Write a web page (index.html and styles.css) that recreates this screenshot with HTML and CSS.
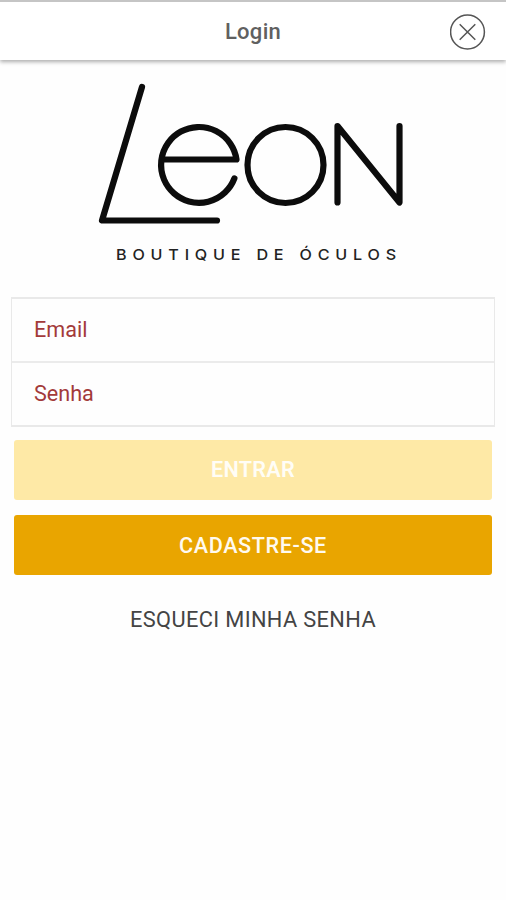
FILE: index.html
```html
<!DOCTYPE html>
<html lang="pt-BR">
<head>
<meta charset="utf-8">
<title>Login</title>
<link rel="stylesheet" href="styles.css">
</head>
<body>
<header class="bar">
  <h1 class="title">Login</h1>
  <button class="close" aria-label="Fechar">
    <svg width="36" height="36" viewBox="0 0 36 36"><circle cx="17.5" cy="18" r="16.9"/><path d="M9.7 10.2 25.3 25.8M25.3 10.2 9.7 25.8"/></svg>
  </button>
</header>
<main>
  <div class="brand">
    <svg class="mark" width="310" height="150" viewBox="96 80 310 150" role="img" aria-label="Leon">
      <polyline points="142,87 102,220.5 217,220.5"/>
      <path d="M162 159.5H236.5A37.9 37.9 0 1 0 234.4 178.4"/>
      <circle cx="285.5" cy="165" r="38"/>
      <polyline points="337.5,202.5 337.5,126 399.5,202.5 399.5,126"/>
    </svg>
    <p class="tagline">BOUTIQUE DE ÓCULOS</p>
  </div>
  <form class="form">
    <div class="fields">
      <label class="field">Email</label>
      <label class="field">Senha</label>
    </div>
    <button type="button" class="btn btn-enter">ENTRAR</button>
    <button type="button" class="btn btn-register">CADASTRE-SE</button>
    <a class="forgot">ESQUECI MINHA SENHA</a>
  </form>
</main>
</body>
</html>
```
FILE: styles.css
```css
* { box-sizing: border-box; }
body {
  margin: 0;
  min-height: 900px;
  background: #fefefe;
  font-family: Roboto, "Liberation Sans", sans-serif;
}
button { border: 0; padding: 0; background: none; font: inherit; }
.bar {
  height: 60px;
  display: grid;
  grid-template-columns: 1fr auto 1fr;
  align-items: center;
  padding: 2px 20px 0;
  border-top: 2px solid #c5c5c5;
  background: #fff;
  box-shadow: 0 2px 4px rgba(0, 0, 0, .32);
}
.title {
  grid-column: 2;
  margin: 0;
  font-size: 22px;
  line-height: 26px;
  font-weight: 500;
  letter-spacing: .3px;
  color: #606060;
}
.close { justify-self: end; width: 36px; height: 36px; }
.close svg { display: block; fill: none; stroke: #555; stroke-width: 1.5; }
.brand {
  height: 237px;
  padding-top: 20px;
  display: flex;
  flex-direction: column;
  align-items: center;
}
.mark {
  margin-right: 4px;
  fill: none;
  stroke: #0c0c0c;
  stroke-width: 6.2;
  stroke-linecap: round;
  stroke-linejoin: round;
}
.tagline {
  margin: 15px 0 0 11px;
  font-family: Inter, sans-serif;
  font-size: 15px;
  line-height: 20px;
  font-weight: 500;
  letter-spacing: 5.4px;
  white-space: nowrap;
  color: #222;
  transform: scaleX(1.075);
}
.form { display: flex; flex-direction: column; padding: 0 14px; }
.fields {
  margin: 0 -3px 13px;
  border: 2px solid #e9e9e9;
  border-width: 2px 1px;
}
.field {
  display: flex;
  align-items: center;
  height: 62px;
  padding: 0 0 2px 22px;
  font-size: 21.6px;
  color: #a33a3a;
}
.field + .field { height: 64px; border-top: 2px solid #ebebeb; }
.btn {
  height: 60px;
  border-radius: 3px;
  color: #fffaf0;
  font-size: 21.6px;
  font-weight: 500;
  letter-spacing: .6px;
}
.btn-enter { background: #fee9a6; padding-bottom: 2px; font-weight: 600; letter-spacing: .3px; color: #fffdf6; }
.btn-register { margin-top: 15px; background: #e9a500; }
.forgot {
  margin-top: 31px;
  text-align: center;
  font-size: 21.8px;
  line-height: 28px;
  letter-spacing: .36px;
  color: #444;
}
```
